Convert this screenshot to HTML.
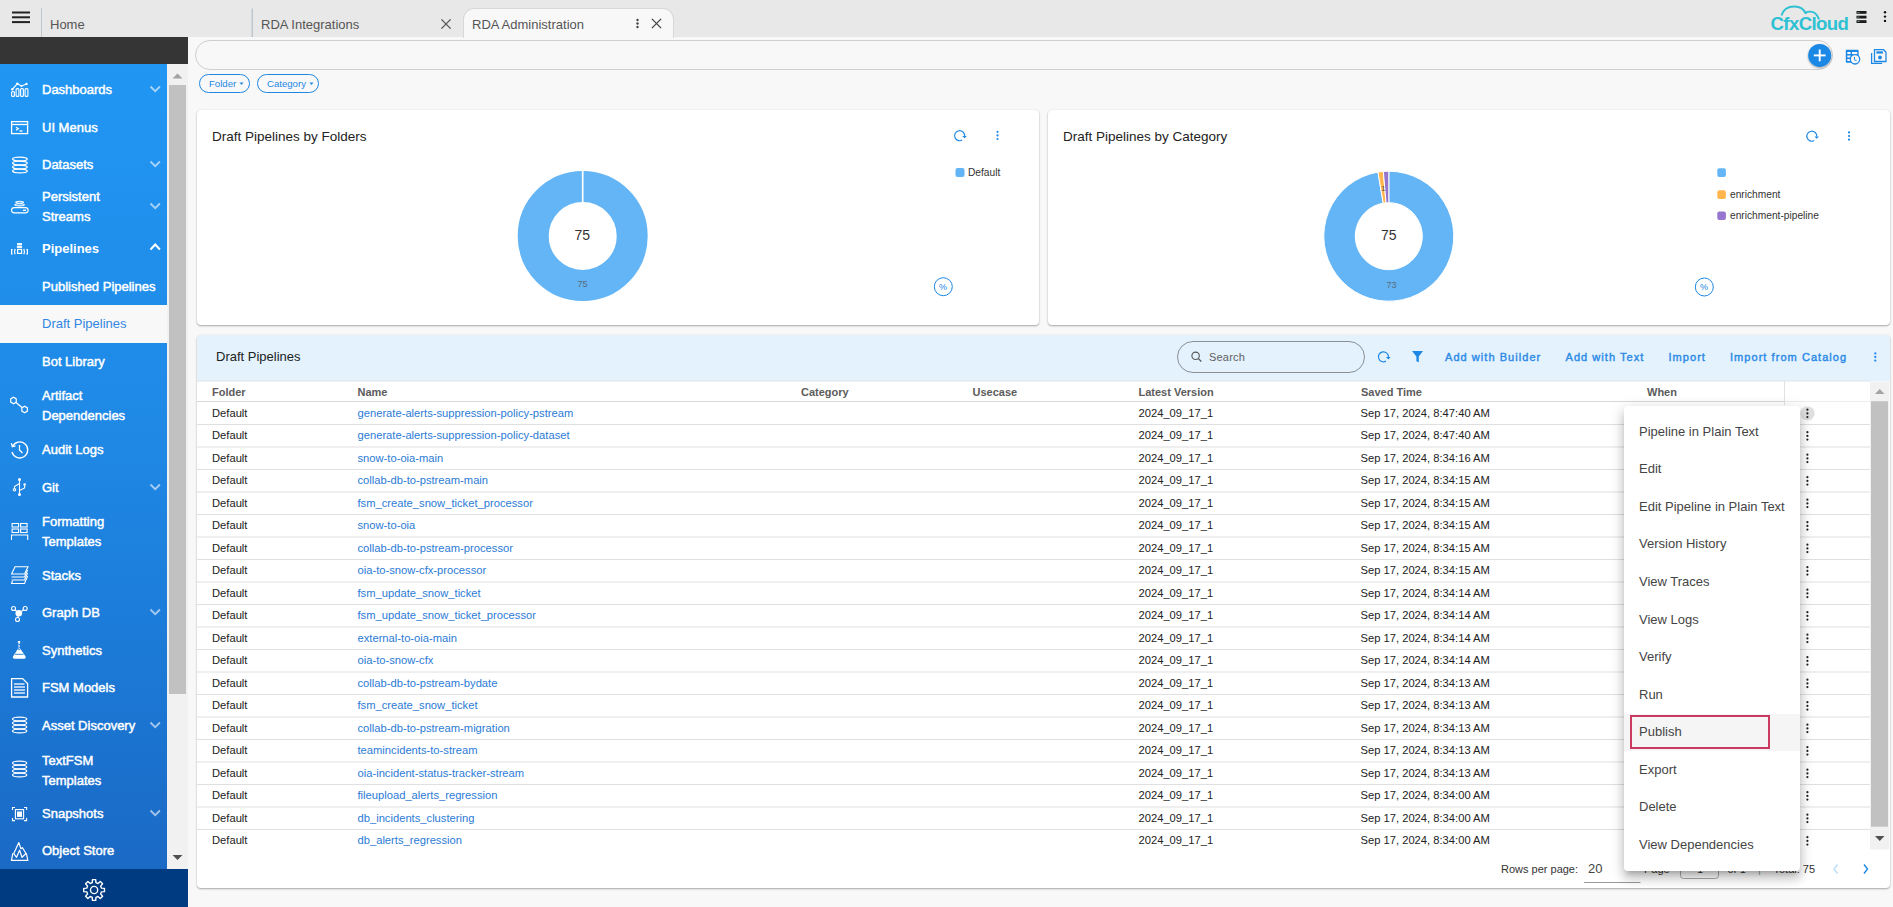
<!DOCTYPE html>
<html><head><meta charset="utf-8"><style>
*{box-sizing:border-box;margin:0;padding:0}
html,body{width:1893px;height:907px;overflow:hidden;background:#f8f8f8;font-family:"Liberation Sans",sans-serif;position:relative}
.a{position:absolute}
svg{display:block;overflow:visible}
.tabtxt{font-size:13px;color:#555;white-space:nowrap;line-height:15px}
.si{left:42px;color:#fff;font-size:13px;-webkit-text-stroke:0.45px #fff;line-height:19.5px;white-space:nowrap}
#darkbar{left:0;top:37px;width:188px;height:27px;background:#353535}
#side{left:0;top:64px;width:167px;height:805px;background:linear-gradient(#2196f3 0%,#1f88e5 47%,#1c7ad7 73%,#1a69c5 100%)}
#sbtrack{left:167px;top:64px;width:21px;height:805px;background:#f1f1f1}
#sbthumb{left:169px;top:85px;width:17px;height:609px;background:#c1c1c1}
#sidebottom{left:0;top:869px;width:188px;height:38px;background:#003a80}
.chip{top:74px;height:19px;border:1.3px solid #1e88e5;border-radius:10px;color:#1e88e5;font-size:9.6px;line-height:17px;padding-left:9px;white-space:nowrap}
.card{background:#fff;border-radius:4px;box-shadow:0 1px 2px rgba(0,0,0,.32),0 0 1px rgba(0,0,0,.12)}
.ctitle{font-size:13.5px;color:#222;white-space:nowrap;line-height:16px}
.leg{font-size:10.2px;color:#333;white-space:nowrap;line-height:12px}
.cell{font-size:11.2px;color:#222;white-space:nowrap;line-height:13px}
.nm{color:#2b7bd6}
.hd{font-size:11px;font-weight:bold;color:#5c5c5c;white-space:nowrap;line-height:13px}
.btn{font-size:11px;color:#2b8ae6;letter-spacing:1.05px;-webkit-text-stroke:0.4px #2b8ae6;white-space:nowrap;top:351px;line-height:13px}
.mi{left:1639px;font-size:13px;color:#444;white-space:nowrap;line-height:15px}
.pg{font-size:11px;color:#333;white-space:nowrap;line-height:13px}
</style></head><body>
<div class="a" style="left:0;top:0;width:1893px;height:37px;background:#e8e8e8"></div>
<div class="a" style="left:463px;top:8px;width:211px;height:30px;background:#f8f8f8;border:1px solid #d6d9dc;border-bottom:none;border-radius:11px 11px 0 0"></div>
<svg class="a" style="left:0;top:0" width="1893" height="40"><g fill="#222"><rect x="12" y="11.5" width="18" height="2"/><rect x="12" y="16.3" width="18" height="2"/><rect x="12" y="21.1" width="18" height="2"/></g><rect x="41" y="8" width="1" height="29" fill="#bfc6cc"/><rect x="251.5" y="8.5" width="1.5" height="28.5" fill="#bfc6cc"/><g stroke="#555" stroke-width="1.3"><line x1="441.4" y1="19.4" x2="450.6" y2="28.6"/><line x1="450.6" y1="19.4" x2="441.4" y2="28.6"/></g><g fill="#444"><circle cx="637.5" cy="20.0" r="1.2"/><circle cx="637.5" cy="23.5" r="1.2"/><circle cx="637.5" cy="27.0" r="1.2"/></g><g stroke="#444" stroke-width="1.3"><line x1="651.9" y1="18.9" x2="661.1" y2="28.1"/><line x1="661.1" y1="18.9" x2="651.9" y2="28.1"/></g><g fill="#1a1a1a"><rect x="1856.5" y="11" width="10" height="2.8"/><rect x="1856.5" y="15.7" width="10" height="2.8"/><rect x="1856.5" y="20.2" width="10" height="2.8"/></g><g fill="#8aa"><rect x="1857.5" y="12" width="2" height="0.8"/><rect x="1857.5" y="16.7" width="2" height="0.8"/><rect x="1857.5" y="21.2" width="2" height="0.8"/></g><g fill="#111"><circle cx="1885" cy="12.3" r="1.2"/><circle cx="1885" cy="16.6" r="1.2"/><circle cx="1885" cy="20.900000000000002" r="1.2"/></g><g stroke="#2ec0d3" stroke-width="1.9" fill="none"><path d="M1781.5 15.5 Q1784 6.5 1794.5 6.5 Q1803 6.5 1806 14"/><path d="M1805.5 12.5 Q1815.5 9 1819 19.5"/></g></svg>
<div class="a tabtxt" style="left:50px;top:17px">Home</div>
<div class="a tabtxt" style="left:261px;top:17px">RDA Integrations</div>
<div class="a tabtxt" style="left:472px;top:17px">RDA Administration</div>
<div class="a" style="left:1770.5px;top:14px;font-size:18.6px;font-weight:bold;letter-spacing:-0.6px;color:#2ec0d3;line-height:20px;white-space:nowrap">CfxCloud</div>
<div id="darkbar" class="a"></div>
<div id="side" class="a"></div>
<div class="a" style="left:0;top:305px;width:167px;height:38px;background:#f8f8f8"></div>
<div class="a" style="left:42px;top:314px;font-size:13px;color:#3386e2;line-height:19.5px;white-space:nowrap">Draft Pipelines</div>
<div class="a si" style="top:80px">Dashboards</div>
<div class="a si" style="top:118px">UI Menus</div>
<div class="a si" style="top:155px">Datasets</div>
<div class="a si" style="top:187px">Persistent<br>Streams</div>
<div class="a si" style="top:239px;font-weight:bold;-webkit-text-stroke:0">Pipelines</div>
<div class="a si" style="top:277px">Published Pipelines</div>
<div class="a si" style="top:352px">Bot Library</div>
<div class="a si" style="top:386px">Artifact<br>Dependencies</div>
<div class="a si" style="top:440px">Audit Logs</div>
<div class="a si" style="top:478px">Git</div>
<div class="a si" style="top:512px">Formatting<br>Templates</div>
<div class="a si" style="top:566px">Stacks</div>
<div class="a si" style="top:603px">Graph DB</div>
<div class="a si" style="top:641px">Synthetics</div>
<div class="a si" style="top:678px">FSM Models</div>
<div class="a si" style="top:716px">Asset Discovery</div>
<div class="a si" style="top:751px">TextFSM<br>Templates</div>
<div class="a si" style="top:804px">Snapshots</div>
<div class="a si" style="top:841px">Object Store</div>
<div id="sbtrack" class="a"></div><div id="sbthumb" class="a"></div><div id="sidebottom" class="a"></div>
<svg class="a" style="left:0;top:0" width="188" height="907"><polyline points="150.5,86.5 155.2,91.2 159.9,86.5" stroke="rgba(255,255,255,0.6)" stroke-width="1.8" fill="none"/><polyline points="150.5,161.5 155.2,166.2 159.9,161.5" stroke="rgba(255,255,255,0.6)" stroke-width="1.8" fill="none"/><polyline points="150.5,203.5 155.2,208.2 159.9,203.5" stroke="rgba(255,255,255,0.6)" stroke-width="1.8" fill="none"/><polyline points="150.5,249.5 155.2,244.5 159.9,249.5" stroke="#fff" stroke-width="2" fill="none"/><polyline points="150.5,484.5 155.2,489.2 159.9,484.5" stroke="rgba(255,255,255,0.6)" stroke-width="1.8" fill="none"/><polyline points="150.5,609.5 155.2,614.2 159.9,609.5" stroke="rgba(255,255,255,0.6)" stroke-width="1.8" fill="none"/><polyline points="150.5,722.5 155.2,727.2 159.9,722.5" stroke="rgba(255,255,255,0.6)" stroke-width="1.8" fill="none"/><polyline points="150.5,810.5 155.2,815.2 159.9,810.5" stroke="rgba(255,255,255,0.6)" stroke-width="1.8" fill="none"/><g stroke="#fff" fill="none" stroke-width="1.1"><rect x="11.6" y="91.6" width="2.8" height="4.8" rx="1"/><rect x="16.1" y="88.6" width="2.8" height="7.8" rx="1"/><rect x="20.6" y="88.6" width="2.8" height="7.8" rx="1"/><rect x="25.1" y="88.6" width="2.8" height="7.8" rx="1"/><polyline points="12.3,89.3 17.3,83.8 21.5,86 26.5,84"/></g><g fill="#fff"><circle cx="12.3" cy="89.3" r="1.2"/><circle cx="17.3" cy="83.8" r="1.2"/><circle cx="21.5" cy="86" r="1"/><circle cx="26.5" cy="84" r="1.2"/></g><g stroke="#fff" fill="none" stroke-width="1.3"><rect x="11.6" y="121.6" width="16" height="12"/><line x1="11.6" y1="124.5" x2="27.6" y2="124.5"/><polyline points="16,127.3 18.3,128.8 16,130.3"/><line x1="19.5" y1="131" x2="22.5" y2="131"/></g><g stroke="#fff" fill="none" stroke-width="1.2"><ellipse cx="19.9" cy="159" rx="7.4" ry="1.9"/><ellipse cx="19.9" cy="163" rx="7.4" ry="1.9"/><ellipse cx="19.9" cy="167" rx="7.4" ry="1.9"/><ellipse cx="19.9" cy="171" rx="7.4" ry="1.9"/></g><g stroke="#fff" fill="none" stroke-width="1.1"><rect x="11.6" y="207.6" width="16.5" height="5.3" rx="2.6"/><ellipse cx="19.6" cy="202.3" rx="3.8" ry="1"/><ellipse cx="19.6" cy="204.8" rx="4.8" ry="1.1"/></g><g fill="#fff"><rect x="23" y="209.6" width="3" height="1.4"/></g><g fill="#fff" opacity="0.95"><rect x="17" y="243" width="5" height="2.2" rx="0.5"/><rect x="16.8" y="245.8" width="5.4" height="2.2" rx="0.8"/></g><g stroke="#fff" fill="none" stroke-width="1.2"><rect x="17.6" y="249.4" width="4" height="4"/><path d="M15.2 249 q-1.3 2.7 0 5.3 M23.8 249 q1.3 2.7 0 5.3"/><polyline points="12.6,249.6 11.6,249.6 11.6,253.8 12.6,253.8"/><polyline points="26.4,249.6 27.4,249.6 27.4,253.8 26.4,253.8"/></g><g stroke="#fff" fill="none" stroke-width="1.2"><polygon points="13.50,403.70 10.73,402.10 10.73,398.90 13.50,397.30 16.27,398.90 16.27,402.10"/><polygon points="24.60,412.70 21.83,411.10 21.83,407.90 24.60,406.30 27.37,407.90 27.37,411.10"/><line x1="16" y1="402.5" x2="22" y2="407.5"/></g><g stroke="#fff" fill="none" stroke-width="1.3"><path d="M12.5 446.5 A8 8 0 1 1 12 452"/><polyline points="19.5,445 19.5,450 22.5,453"/><polyline points="11.3,443.3 12.4,446.7 15.6,445.8"/></g><g stroke="#fff" fill="none" stroke-width="1.1"><line x1="19.5" y1="480" x2="19.5" y2="494.5"/><polyline points="19.5,483.5 14.5,486.5 14.5,488.6"/><polyline points="19.5,490.5 24.6,488 24.6,485.5"/><circle cx="14.5" cy="489.8" r="1.2"/></g><g fill="#fff"><circle cx="19.5" cy="479.6" r="1.5"/><circle cx="19.5" cy="494.6" r="1.5"/><rect x="23.5" y="483.4" width="2.3" height="2.2"/></g><g stroke="#fff" fill="none" stroke-width="1.1"><rect x="12.1" y="523.5" width="6.5" height="3.5"/><rect x="20.6" y="523.5" width="6.5" height="3.5"/><rect x="12.1" y="529" width="6.5" height="3.5"/><rect x="20.6" y="529" width="6.5" height="3.5"/><polyline points="11.5,540 11.5,535 27.7,535 27.7,540"/></g><g stroke="#fff" fill="none" stroke-width="1.1"><polygon points="15,566.8 28,566.8 24.5,574 11.6,574"/><polyline points="27.6,570 24.5,577 11.6,577"/><polyline points="27.6,573 24.5,580 11.6,580"/><polyline points="27.6,576 24.5,583.5 11.6,583.5 12.5,581"/></g><g stroke="#fff" fill="none" stroke-width="1.1"><circle cx="13.5" cy="608.5" r="2"/><circle cx="25.2" cy="608.5" r="2"/><circle cx="17.5" cy="619.5" r="2"/><line x1="15" y1="610" x2="17" y2="611.5"/><line x1="23.5" y1="609.5" x2="21.5" y2="611.5"/><line x1="18" y1="616" x2="18" y2="617.5"/></g><circle cx="18.8" cy="613.3" r="3.3" fill="#fff"/><g fill="#fff"><path d="M17.8 641 h2.4 v1.5 h-0.4 v5.5 l5.8 8.6 q0.8 1.6 -1 2.1 h-10.6 q-1.8 -0.5 -1 -2.1 l5.5 -8.6 v-5.5 h-0.7z"/></g><g stroke="#1e7fe0" stroke-width="0.9" fill="none"><path d="M18.6 644.5 h1.6 v2 l-1.4 1.6 v1.8 l1.8 -1.2"/><line x1="15" y1="654.3" x2="23.5" y2="654.3"/></g><g stroke="#fff" fill="none" stroke-width="1.3"><path d="M11.6 678.6 h11 l5 5 v13.4 h-16z"/><line x1="14" y1="684" x2="24.5" y2="684"/><line x1="14" y1="687" x2="25" y2="687"/><line x1="14" y1="690" x2="25" y2="690"/><line x1="14" y1="693" x2="25" y2="693"/></g><g stroke="#fff" fill="none" stroke-width="1.2"><ellipse cx="19.65" cy="719" rx="7.15" ry="1.9"/><ellipse cx="19.65" cy="723" rx="7.15" ry="1.9"/><ellipse cx="19.65" cy="727" rx="7.15" ry="1.9"/><ellipse cx="19.65" cy="731" rx="7.15" ry="1.9"/></g><g stroke="#fff" fill="none" stroke-width="1.2"><ellipse cx="19.65" cy="763" rx="7.15" ry="1.9"/><ellipse cx="19.65" cy="767" rx="7.15" ry="1.9"/><ellipse cx="19.65" cy="771" rx="7.15" ry="1.9"/><ellipse cx="19.65" cy="775" rx="7.15" ry="1.9"/></g><g stroke="#fff" fill="none" stroke-width="1.1"><polyline points="12.5,810 12.5,807.5 15,807.5"/><polyline points="24,807.5 26.6,807.5 26.6,810"/><polyline points="12.5,818 12.5,820.6 15,820.6"/><polyline points="24,820.6 26.6,820.6 26.6,818"/><rect x="15.4" y="809.6" width="8.2" height="9.2"/></g><rect x="17" y="811.5" width="5" height="5.4" fill="#fff"/><g stroke="#fff" fill="none" stroke-width="1.2" stroke-linejoin="round"><path d="M12.9 853.2 L11.4 860.4 H27.8 L26.3 853.2"/><path d="M13.8 853.5 L18.8 842.5 L20.9 848.8 L22.4 847.6 L26 853.5 L22 857.3 L19.6 850.3 L16.5 857.3 Z"/></g><g stroke="#fff" fill="none" stroke-width="1.4" stroke-linejoin="round"><polygon points="92.26,882.63 92.46,879.63 95.74,879.63 95.94,882.63 98.01,883.49 100.27,881.51 102.59,883.83 100.61,886.09 101.47,888.16 104.47,888.36 104.47,891.64 101.47,891.84 100.61,893.91 102.59,896.17 100.27,898.49 98.01,896.51 95.94,897.37 95.74,900.37 92.46,900.37 92.26,897.37 90.19,896.51 87.93,898.49 85.61,896.17 87.59,893.91 86.73,891.84 83.73,891.64 83.73,888.36 86.73,888.16 87.59,886.09 85.61,883.83 87.93,881.51 90.19,883.49"/></g><circle cx="94.1" cy="890" r="3.6" stroke="#fff" stroke-width="1.4" fill="none"/><polygon points="172.5,78.5 177.5,73.5 182.5,78.5" fill="#a3a3a3"/><polygon points="172.5,855 182.5,855 177.5,860" fill="#505050"/></svg>
<div class="a" style="left:195px;top:40px;width:1638px;height:30px;border:1px solid #cfcfcf;border-radius:15px;background:#f8f8f8"></div>
<div class="a chip" style="left:199px;width:51px">Folder</div>
<div class="a chip" style="left:257px;width:62px">Category</div>
<svg class="a" style="left:0;top:0" width="1893" height="100"><defs><filter id="sh" x="-50%" y="-50%" width="200%" height="200%"><feDropShadow dx="0" dy="1" stdDeviation="1" flood-color="#000" flood-opacity="0.35"/></filter></defs><polygon points="239.5,82.5 243.5,82.5 241.5,85" fill="#1e88e5"/><polygon points="309.5,82.5 313.5,82.5 311.5,85" fill="#1e88e5"/><circle cx="1819.7" cy="55.4" r="11.5" fill="#1e88e5" filter="url(#sh)"/><g stroke="#fff" stroke-width="1.9"><line x1="1813.8" y1="55.4" x2="1825.6" y2="55.4"/><line x1="1819.7" y1="49.5" x2="1819.7" y2="61.3"/></g><g fill="#1e88e5"><rect x="1845.8" y="49.8" width="12.8" height="13" rx="1"/></g><g fill="#f8f8f8"><rect x="1847.3" y="52" width="3.3" height="2"/><rect x="1852" y="52" width="5.2" height="2"/><rect x="1847.3" y="55.5" width="3.3" height="2"/><rect x="1847.3" y="59" width="3.3" height="2"/></g><circle cx="1855" cy="59.3" r="4.7" fill="#f8f8f8" stroke="#1e88e5" stroke-width="1.3"/><polyline points="1854.5,57 1854.5,59.8 1856.6,60.8" stroke="#1e88e5" stroke-width="1" fill="none"/><g stroke="#1e88e5" stroke-width="1.3" fill="none"><path d="M1871.6 53 v10.3 h10.5"/><path d="M1874.5 49.7 h9 l2.5 2.5 v9.3 h-11.5 z"/></g><rect x="1876.4" y="51.3" width="6.5" height="2.3" fill="#1e88e5"/><circle cx="1880" cy="57.5" r="1.9" fill="#1e88e5"/></svg>
<div class="a card" style="left:197px;top:110px;width:842px;height:215px"></div>
<div class="a card" style="left:1048px;top:110px;width:842px;height:215px"></div>
<div class="a ctitle" style="left:212px;top:129px">Draft Pipelines by Folders</div>
<div class="a ctitle" style="left:1063px;top:129px">Draft Pipelines by Category</div>
<svg class="a" style="left:0;top:0" width="1893" height="340"><circle cx="582.7" cy="236" r="49.5" stroke="#64b5f6" stroke-width="31" fill="none"/><line x1="582.7" y1="170" x2="582.7" y2="203" stroke="#fff" stroke-width="1.7"/><path d="M1388.80 171.20 A65 65 0 1 1 1377.96 172.11 L1383.21 203.17 A33.5 33.5 0 1 0 1388.80 202.70 Z" fill="#64b5f6" stroke="#fff" stroke-width="1"/><path d="M1377.96 172.11 A65 65 0 0 1 1383.36 171.43 L1386.00 202.82 A33.5 33.5 0 0 0 1383.21 203.17 Z" fill="#ffb74d" stroke="#fff" stroke-width="1"/><path d="M1383.36 171.43 A65 65 0 0 1 1388.80 171.20 L1388.80 202.70 A33.5 33.5 0 0 0 1386.00 202.82 Z" fill="#9575cd" stroke="#fff" stroke-width="1"/><path d="M962.10 140.03 A5.0 5.0 0 1 1 964.60 136.00" stroke="#1e88e5" stroke-width="1.15" fill="none"/><polygon points="962.20,135.90 966.80,135.90 964.50,138.30" fill="#1e88e5"/><g fill="#1e88e5"><circle cx="997.5" cy="131.8" r="1.1"/><circle cx="997.5" cy="135.4" r="1.1"/><circle cx="997.5" cy="139.0" r="1.1"/></g><path d="M1814.30 140.53 A5.0 5.0 0 1 1 1816.80 136.50" stroke="#1e88e5" stroke-width="1.15" fill="none"/><polygon points="1814.40,136.40 1819.00,136.40 1816.70,138.80" fill="#1e88e5"/><g fill="#1e88e5"><circle cx="1849" cy="132.4" r="1.1"/><circle cx="1849" cy="136" r="1.1"/><circle cx="1849" cy="139.6" r="1.1"/></g><circle cx="943.3" cy="286.7" r="9" stroke="#1e88e5" stroke-width="1" fill="none"/><circle cx="1704.3" cy="287" r="9" stroke="#1e88e5" stroke-width="1" fill="none"/><rect x="955.5" y="168" width="9" height="9" rx="2" fill="#64b5f6"/><rect x="1717.3" y="168.3" width="8.6" height="8.6" rx="2" fill="#64b5f6"/><rect x="1717.3" y="190.3" width="8.6" height="8.6" rx="2" fill="#ffb74d"/><rect x="1717.3" y="211.5" width="8.6" height="8.6" rx="2" fill="#9575cd"/></svg>
<div class="a" style="left:574.5px;top:227.3px;font-size:14px;color:#333;line-height:16px">75</div>
<div class="a" style="left:1381px;top:227.3px;font-size:14px;color:#333;line-height:16px">75</div>
<div class="a" style="left:577.5px;top:279px;font-size:9px;color:#5a6b7a;line-height:10px">75</div>
<div class="a" style="left:1386.5px;top:280px;font-size:9px;color:#5a6b7a;line-height:10px">73</div>
<div class="a" style="left:939px;top:282px;font-size:9px;color:#1e88e5;line-height:10px">%</div>
<div class="a" style="left:1700px;top:282.3px;font-size:9px;color:#1e88e5;line-height:10px">%</div>
<div class="a leg" style="left:968px;top:166.5px">Default</div>
<div class="a" style="left:1381px;top:184px;font-size:8px;color:#555;line-height:9px">1</div>
<div class="a leg" style="left:1730px;top:188.5px">enrichment</div>
<div class="a leg" style="left:1730px;top:209.5px">enrichment-pipeline</div>
<div class="a card" style="left:197px;top:335px;width:1693px;height:553px"></div>
<div class="a" style="left:197px;top:335px;width:1693px;height:46px;background:#e3f2fd;border-radius:4px 4px 0 0"></div>
<div class="a" style="left:216px;top:349px;font-size:13px;color:#222;line-height:15px">Draft Pipelines</div>
<div class="a" style="left:1177px;top:341px;width:188px;height:32px;border:1px solid #8a8f94;border-radius:16px"></div>
<div class="a" style="left:1209px;top:350.5px;font-size:11px;color:#5f5f5f;letter-spacing:.2px;line-height:13px">Search</div>
<div class="a btn" style="left:1445px">Add with Builder</div>
<div class="a btn" style="left:1565.5px">Add with Text</div>
<div class="a btn" style="left:1668.5px">Import</div>
<div class="a btn" style="left:1730px">Import from Catalog</div>
<div class="a hd" style="left:212px;top:385.5px">Folder</div>
<div class="a hd" style="left:357.5px;top:385.5px">Name</div>
<div class="a hd" style="left:801px;top:385.5px">Category</div>
<div class="a hd" style="left:972.5px;top:385.5px">Usecase</div>
<div class="a hd" style="left:1138.5px;top:385.5px">Latest Version</div>
<div class="a hd" style="left:1361px;top:385.5px">Saved Time</div>
<div class="a hd" style="left:1647px;top:385.5px">When</div>
<svg class="a" style="left:0;top:0" width="1893" height="907"><rect x="197" y="380.5" width="1673" height="1" fill="#dfe3e6"/><rect x="197" y="401" width="1588" height="1" fill="#d8d8d8"/><rect x="1785" y="401" width="85" height="1" fill="#ececec"/><rect x="1784" y="381" width="1" height="24" fill="#e2e2e2"/><rect x="197" y="424.0" width="1673" height="1" fill="#e0e0e0"/><rect x="197" y="446.5" width="1673" height="1" fill="#e0e0e0"/><rect x="197" y="469.0" width="1673" height="1" fill="#e0e0e0"/><rect x="197" y="491.5" width="1673" height="1" fill="#e0e0e0"/><rect x="197" y="514.0" width="1673" height="1" fill="#e0e0e0"/><rect x="197" y="536.5" width="1673" height="1" fill="#e0e0e0"/><rect x="197" y="559.0" width="1673" height="1" fill="#e0e0e0"/><rect x="197" y="581.5" width="1673" height="1" fill="#e0e0e0"/><rect x="197" y="604.0" width="1673" height="1" fill="#e0e0e0"/><rect x="197" y="626.5" width="1673" height="1" fill="#e0e0e0"/><rect x="197" y="649.0" width="1673" height="1" fill="#e0e0e0"/><rect x="197" y="671.5" width="1673" height="1" fill="#e0e0e0"/><rect x="197" y="694.0" width="1673" height="1" fill="#e0e0e0"/><rect x="197" y="716.5" width="1673" height="1" fill="#e0e0e0"/><rect x="197" y="739.0" width="1673" height="1" fill="#e0e0e0"/><rect x="197" y="761.5" width="1673" height="1" fill="#e0e0e0"/><rect x="197" y="784.0" width="1673" height="1" fill="#e0e0e0"/><rect x="197" y="806.5" width="1673" height="1" fill="#e0e0e0"/><rect x="197" y="829.0" width="1673" height="1" fill="#e0e0e0"/><circle cx="1195.6" cy="355.8" r="3.7" stroke="#555" stroke-width="1.1" fill="none"/><line x1="1198.4" y1="358.6" x2="1201.3" y2="361.5" stroke="#555" stroke-width="1.3"/><path d="M1385.90 361.13 A5.0 5.0 0 1 1 1388.40 357.10" stroke="#1e88e5" stroke-width="1.2" fill="none"/><polygon points="1386.00,357.00 1390.60,357.00 1388.30,359.40" fill="#1e88e5"/><path d="M1412 351 h11 l-4.2 5.5 v5.8 l-2.4 -1 v-4.8 z" fill="#1e88e5"/><g fill="#2a8cf0"><circle cx="1875.3" cy="353.4" r="1.15"/><circle cx="1875.3" cy="357" r="1.15"/><circle cx="1875.3" cy="360.6" r="1.15"/></g><circle cx="1807.4" cy="413.4" r="7.2" fill="#e0e0e0"/><g fill="#222"><circle cx="1807.4" cy="409.7" r="1.1"/><circle cx="1807.4" cy="413.4" r="1.1"/><circle cx="1807.4" cy="417.09999999999997" r="1.1"/></g><g fill="#222"><circle cx="1807.4" cy="432.2" r="1.1"/><circle cx="1807.4" cy="435.9" r="1.1"/><circle cx="1807.4" cy="439.59999999999997" r="1.1"/></g><g fill="#222"><circle cx="1807.4" cy="454.7" r="1.1"/><circle cx="1807.4" cy="458.4" r="1.1"/><circle cx="1807.4" cy="462.09999999999997" r="1.1"/></g><g fill="#222"><circle cx="1807.4" cy="477.2" r="1.1"/><circle cx="1807.4" cy="480.9" r="1.1"/><circle cx="1807.4" cy="484.59999999999997" r="1.1"/></g><g fill="#222"><circle cx="1807.4" cy="499.7" r="1.1"/><circle cx="1807.4" cy="503.4" r="1.1"/><circle cx="1807.4" cy="507.09999999999997" r="1.1"/></g><g fill="#222"><circle cx="1807.4" cy="522.1999999999999" r="1.1"/><circle cx="1807.4" cy="525.9" r="1.1"/><circle cx="1807.4" cy="529.6" r="1.1"/></g><g fill="#222"><circle cx="1807.4" cy="544.6999999999999" r="1.1"/><circle cx="1807.4" cy="548.4" r="1.1"/><circle cx="1807.4" cy="552.1" r="1.1"/></g><g fill="#222"><circle cx="1807.4" cy="567.1999999999999" r="1.1"/><circle cx="1807.4" cy="570.9" r="1.1"/><circle cx="1807.4" cy="574.6" r="1.1"/></g><g fill="#222"><circle cx="1807.4" cy="589.6999999999999" r="1.1"/><circle cx="1807.4" cy="593.4" r="1.1"/><circle cx="1807.4" cy="597.1" r="1.1"/></g><g fill="#222"><circle cx="1807.4" cy="612.1999999999999" r="1.1"/><circle cx="1807.4" cy="615.9" r="1.1"/><circle cx="1807.4" cy="619.6" r="1.1"/></g><g fill="#222"><circle cx="1807.4" cy="634.6999999999999" r="1.1"/><circle cx="1807.4" cy="638.4" r="1.1"/><circle cx="1807.4" cy="642.1" r="1.1"/></g><g fill="#222"><circle cx="1807.4" cy="657.1999999999999" r="1.1"/><circle cx="1807.4" cy="660.9" r="1.1"/><circle cx="1807.4" cy="664.6" r="1.1"/></g><g fill="#222"><circle cx="1807.4" cy="679.6999999999999" r="1.1"/><circle cx="1807.4" cy="683.4" r="1.1"/><circle cx="1807.4" cy="687.1" r="1.1"/></g><g fill="#222"><circle cx="1807.4" cy="702.1999999999999" r="1.1"/><circle cx="1807.4" cy="705.9" r="1.1"/><circle cx="1807.4" cy="709.6" r="1.1"/></g><g fill="#222"><circle cx="1807.4" cy="724.6999999999999" r="1.1"/><circle cx="1807.4" cy="728.4" r="1.1"/><circle cx="1807.4" cy="732.1" r="1.1"/></g><g fill="#222"><circle cx="1807.4" cy="747.1999999999999" r="1.1"/><circle cx="1807.4" cy="750.9" r="1.1"/><circle cx="1807.4" cy="754.6" r="1.1"/></g><g fill="#222"><circle cx="1807.4" cy="769.6999999999999" r="1.1"/><circle cx="1807.4" cy="773.4" r="1.1"/><circle cx="1807.4" cy="777.1" r="1.1"/></g><g fill="#222"><circle cx="1807.4" cy="792.1999999999999" r="1.1"/><circle cx="1807.4" cy="795.9" r="1.1"/><circle cx="1807.4" cy="799.6" r="1.1"/></g><g fill="#222"><circle cx="1807.4" cy="814.6999999999999" r="1.1"/><circle cx="1807.4" cy="818.4" r="1.1"/><circle cx="1807.4" cy="822.1" r="1.1"/></g><g fill="#222"><circle cx="1807.4" cy="837.1999999999999" r="1.1"/><circle cx="1807.4" cy="840.9" r="1.1"/><circle cx="1807.4" cy="844.6" r="1.1"/></g><rect x="1870" y="381.5" width="19.5" height="468" fill="#f1f1f1"/><rect x="1871" y="401.2" width="17" height="425.5" fill="#c1c1c1"/><polygon points="1875,394 1884.5,394 1879.75,389" fill="#a3a3a3"/><polygon points="1875,836 1884.5,836 1879.75,841" fill="#505050"/><rect x="1584" y="882" width="56.5" height="1" fill="#999"/><rect x="1680.5" y="862.5" width="38" height="16" rx="3" stroke="#aaa" stroke-width="1" fill="none"/><polyline points="1837.5,864.5 1834,869 1837.5,873.5" stroke="#bbdefb" stroke-width="1.4" fill="none"/><polyline points="1864,864.5 1867.5,869 1864,873.5" stroke="#1e88e5" stroke-width="1.4" fill="none"/></svg>
<div class="a cell" style="left:212px;top:406.6px">Default</div>
<div class="a cell nm" style="left:357.5px;top:406.6px">generate-alerts-suppression-policy-pstream</div>
<div class="a cell" style="left:1138.5px;top:406.6px">2024_09_17_1</div>
<div class="a cell" style="left:1360.5px;top:406.6px">Sep 17, 2024, 8:47:40 AM</div>
<div class="a cell" style="left:212px;top:429.1px">Default</div>
<div class="a cell nm" style="left:357.5px;top:429.1px">generate-alerts-suppression-policy-dataset</div>
<div class="a cell" style="left:1138.5px;top:429.1px">2024_09_17_1</div>
<div class="a cell" style="left:1360.5px;top:429.1px">Sep 17, 2024, 8:47:40 AM</div>
<div class="a cell" style="left:212px;top:451.6px">Default</div>
<div class="a cell nm" style="left:357.5px;top:451.6px">snow-to-oia-main</div>
<div class="a cell" style="left:1138.5px;top:451.6px">2024_09_17_1</div>
<div class="a cell" style="left:1360.5px;top:451.6px">Sep 17, 2024, 8:34:16 AM</div>
<div class="a cell" style="left:212px;top:474.1px">Default</div>
<div class="a cell nm" style="left:357.5px;top:474.1px">collab-db-to-pstream-main</div>
<div class="a cell" style="left:1138.5px;top:474.1px">2024_09_17_1</div>
<div class="a cell" style="left:1360.5px;top:474.1px">Sep 17, 2024, 8:34:15 AM</div>
<div class="a cell" style="left:212px;top:496.6px">Default</div>
<div class="a cell nm" style="left:357.5px;top:496.6px">fsm_create_snow_ticket_processor</div>
<div class="a cell" style="left:1138.5px;top:496.6px">2024_09_17_1</div>
<div class="a cell" style="left:1360.5px;top:496.6px">Sep 17, 2024, 8:34:15 AM</div>
<div class="a cell" style="left:212px;top:519.1px">Default</div>
<div class="a cell nm" style="left:357.5px;top:519.1px">snow-to-oia</div>
<div class="a cell" style="left:1138.5px;top:519.1px">2024_09_17_1</div>
<div class="a cell" style="left:1360.5px;top:519.1px">Sep 17, 2024, 8:34:15 AM</div>
<div class="a cell" style="left:212px;top:541.6px">Default</div>
<div class="a cell nm" style="left:357.5px;top:541.6px">collab-db-to-pstream-processor</div>
<div class="a cell" style="left:1138.5px;top:541.6px">2024_09_17_1</div>
<div class="a cell" style="left:1360.5px;top:541.6px">Sep 17, 2024, 8:34:15 AM</div>
<div class="a cell" style="left:212px;top:564.1px">Default</div>
<div class="a cell nm" style="left:357.5px;top:564.1px">oia-to-snow-cfx-processor</div>
<div class="a cell" style="left:1138.5px;top:564.1px">2024_09_17_1</div>
<div class="a cell" style="left:1360.5px;top:564.1px">Sep 17, 2024, 8:34:15 AM</div>
<div class="a cell" style="left:212px;top:586.6px">Default</div>
<div class="a cell nm" style="left:357.5px;top:586.6px">fsm_update_snow_ticket</div>
<div class="a cell" style="left:1138.5px;top:586.6px">2024_09_17_1</div>
<div class="a cell" style="left:1360.5px;top:586.6px">Sep 17, 2024, 8:34:14 AM</div>
<div class="a cell" style="left:212px;top:609.1px">Default</div>
<div class="a cell nm" style="left:357.5px;top:609.1px">fsm_update_snow_ticket_processor</div>
<div class="a cell" style="left:1138.5px;top:609.1px">2024_09_17_1</div>
<div class="a cell" style="left:1360.5px;top:609.1px">Sep 17, 2024, 8:34:14 AM</div>
<div class="a cell" style="left:212px;top:631.6px">Default</div>
<div class="a cell nm" style="left:357.5px;top:631.6px">external-to-oia-main</div>
<div class="a cell" style="left:1138.5px;top:631.6px">2024_09_17_1</div>
<div class="a cell" style="left:1360.5px;top:631.6px">Sep 17, 2024, 8:34:14 AM</div>
<div class="a cell" style="left:212px;top:654.1px">Default</div>
<div class="a cell nm" style="left:357.5px;top:654.1px">oia-to-snow-cfx</div>
<div class="a cell" style="left:1138.5px;top:654.1px">2024_09_17_1</div>
<div class="a cell" style="left:1360.5px;top:654.1px">Sep 17, 2024, 8:34:14 AM</div>
<div class="a cell" style="left:212px;top:676.6px">Default</div>
<div class="a cell nm" style="left:357.5px;top:676.6px">collab-db-to-pstream-bydate</div>
<div class="a cell" style="left:1138.5px;top:676.6px">2024_09_17_1</div>
<div class="a cell" style="left:1360.5px;top:676.6px">Sep 17, 2024, 8:34:13 AM</div>
<div class="a cell" style="left:212px;top:699.1px">Default</div>
<div class="a cell nm" style="left:357.5px;top:699.1px">fsm_create_snow_ticket</div>
<div class="a cell" style="left:1138.5px;top:699.1px">2024_09_17_1</div>
<div class="a cell" style="left:1360.5px;top:699.1px">Sep 17, 2024, 8:34:13 AM</div>
<div class="a cell" style="left:212px;top:721.6px">Default</div>
<div class="a cell nm" style="left:357.5px;top:721.6px">collab-db-to-pstream-migration</div>
<div class="a cell" style="left:1138.5px;top:721.6px">2024_09_17_1</div>
<div class="a cell" style="left:1360.5px;top:721.6px">Sep 17, 2024, 8:34:13 AM</div>
<div class="a cell" style="left:212px;top:744.1px">Default</div>
<div class="a cell nm" style="left:357.5px;top:744.1px">teamincidents-to-stream</div>
<div class="a cell" style="left:1138.5px;top:744.1px">2024_09_17_1</div>
<div class="a cell" style="left:1360.5px;top:744.1px">Sep 17, 2024, 8:34:13 AM</div>
<div class="a cell" style="left:212px;top:766.6px">Default</div>
<div class="a cell nm" style="left:357.5px;top:766.6px">oia-incident-status-tracker-stream</div>
<div class="a cell" style="left:1138.5px;top:766.6px">2024_09_17_1</div>
<div class="a cell" style="left:1360.5px;top:766.6px">Sep 17, 2024, 8:34:13 AM</div>
<div class="a cell" style="left:212px;top:789.1px">Default</div>
<div class="a cell nm" style="left:357.5px;top:789.1px">fileupload_alerts_regression</div>
<div class="a cell" style="left:1138.5px;top:789.1px">2024_09_17_1</div>
<div class="a cell" style="left:1360.5px;top:789.1px">Sep 17, 2024, 8:34:00 AM</div>
<div class="a cell" style="left:212px;top:811.6px">Default</div>
<div class="a cell nm" style="left:357.5px;top:811.6px">db_incidents_clustering</div>
<div class="a cell" style="left:1138.5px;top:811.6px">2024_09_17_1</div>
<div class="a cell" style="left:1360.5px;top:811.6px">Sep 17, 2024, 8:34:00 AM</div>
<div class="a cell" style="left:212px;top:834.1px">Default</div>
<div class="a cell nm" style="left:357.5px;top:834.1px">db_alerts_regression</div>
<div class="a cell" style="left:1138.5px;top:834.1px">2024_09_17_1</div>
<div class="a cell" style="left:1360.5px;top:834.1px">Sep 17, 2024, 8:34:00 AM</div>
<div class="a pg" style="left:1501px;top:862.5px">Rows per page:</div>
<div class="a" style="left:1588px;top:861px;font-size:13px;color:#444;line-height:15px">20</div>
<div class="a pg" style="left:1644px;top:862.5px">Page</div>
<div class="a pg" style="left:1697px;top:863px">1</div>
<div class="a pg" style="left:1727.5px;top:862.5px">of 1</div>
<div class="a pg" style="left:1758px;top:862.5px;color:#999">|</div>
<div class="a pg" style="left:1773.5px;top:862.5px">Total: 75</div>
<div class="a" style="left:1624px;top:405.5px;width:176px;height:465.5px;background:#fff;border-radius:4px;box-shadow:0 5px 5px -3px rgba(0,0,0,.2),0 8px 10px 1px rgba(0,0,0,.14),0 3px 14px 2px rgba(0,0,0,.12)"></div>
<div class="a" style="left:1624px;top:713.5px;width:176px;height:37px;background:#f5f5f5"></div>
<div class="a" style="left:1629.5px;top:714.5px;width:140.5px;height:34px;border:2px solid #cc3a61"></div>
<div class="a mi" style="top:423.7px">Pipeline in Plain Text</div>
<div class="a mi" style="top:461.2px">Edit</div>
<div class="a mi" style="top:498.8px">Edit Pipeline in Plain Text</div>
<div class="a mi" style="top:536.4px">Version History</div>
<div class="a mi" style="top:573.9px">View Traces</div>
<div class="a mi" style="top:611.5px">View Logs</div>
<div class="a mi" style="top:649.0px">Verify</div>
<div class="a mi" style="top:686.5px">Run</div>
<div class="a mi" style="top:724.1px">Publish</div>
<div class="a mi" style="top:761.6px">Export</div>
<div class="a mi" style="top:799.2px">Delete</div>
<div class="a mi" style="top:836.8px">View Dependencies</div>
</body></html>
